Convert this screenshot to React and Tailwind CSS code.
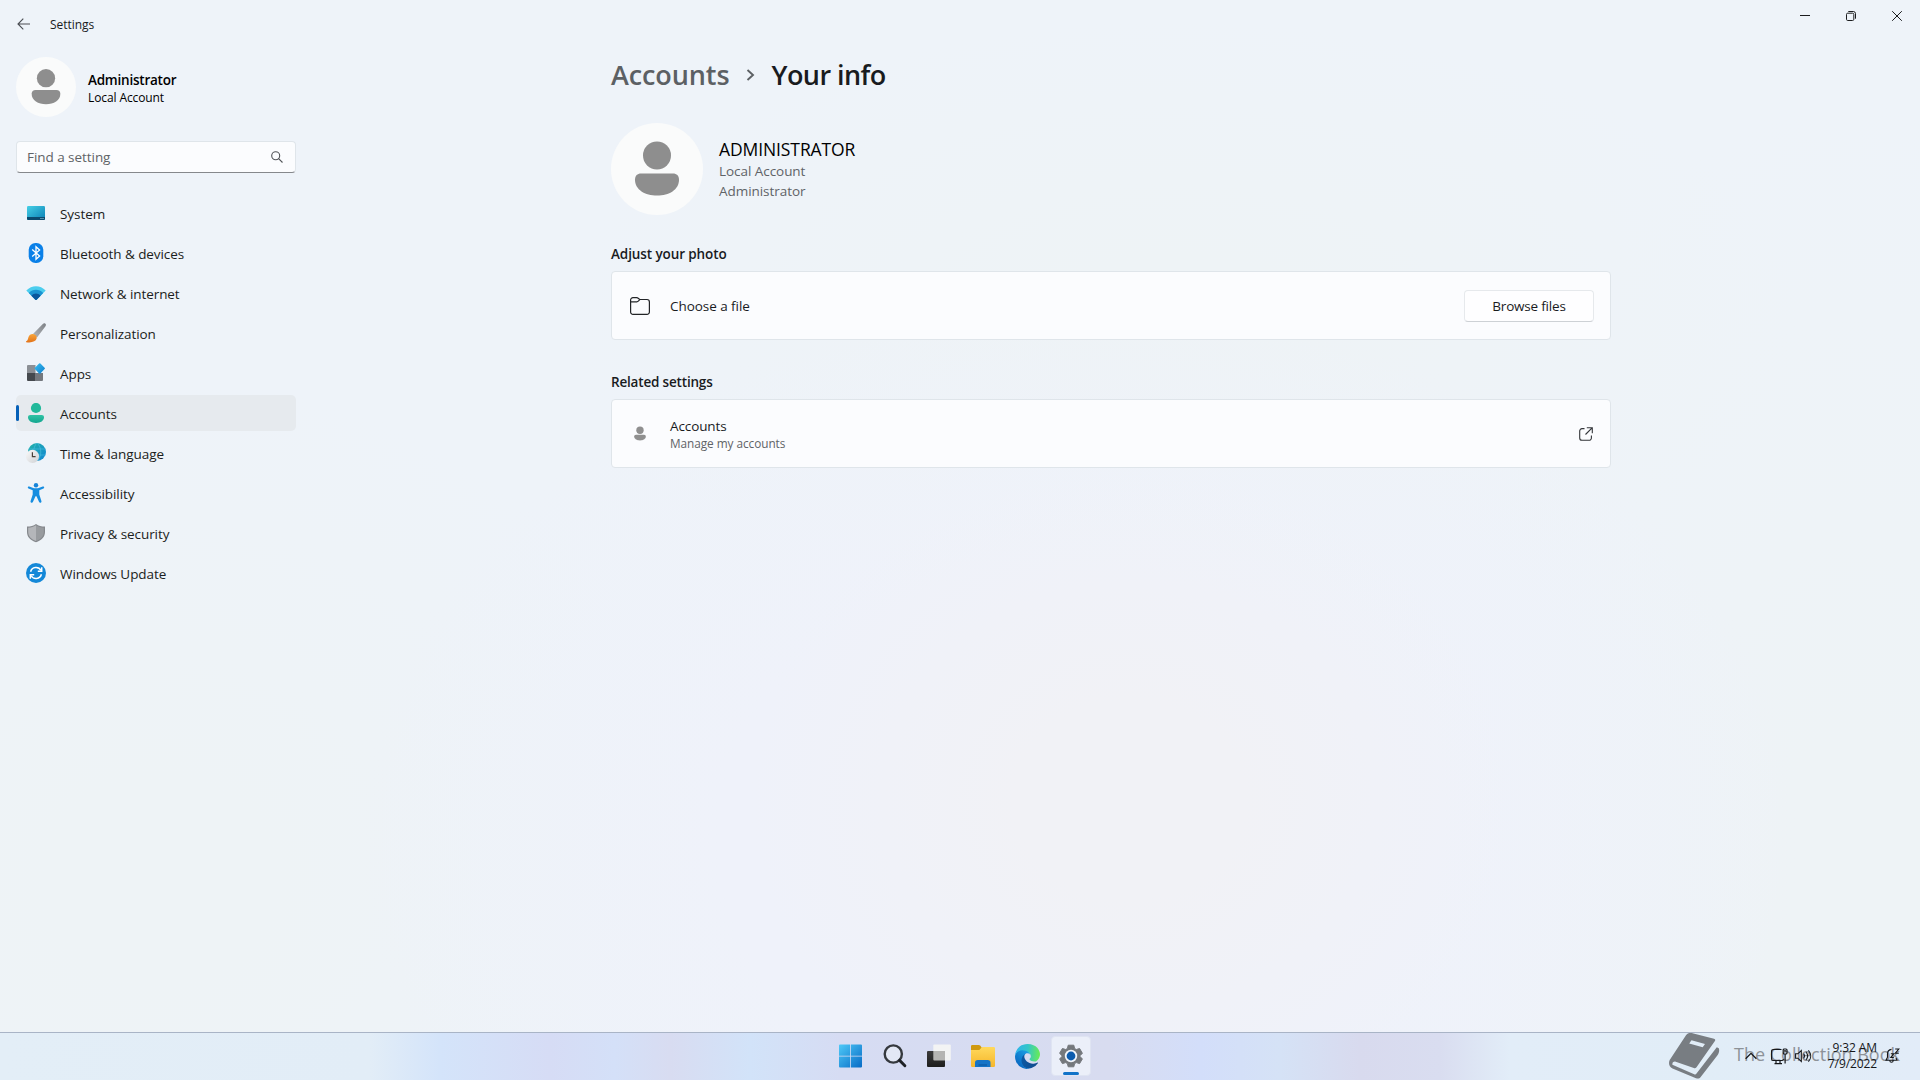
import { useState } from "react";

const SystemIcon = () => (
  <svg width="20" height="20" viewBox="0 0 20 20">
    <defs>
      <linearGradient id="sysA" x1="0" y1="0" x2="1" y2="1">
        <stop offset="0" stopColor="#45cfe6" />
        <stop offset="1" stopColor="#0a7fb5" />
      </linearGradient>
    </defs>
    <rect x="1" y="3" width="18" height="14" rx="1.2" fill="url(#sysA)" />
    <path d="M1 14h18v1.800a1.200 1.200 0 0 1-1.200 1.200H2.200A1.200 1.200 0 0 1 1 15.800z" fill="#0b4a6f" />
    <path d="M14.500 15h1v1h-1zM16.500 15h1v1h-1z" fill="#9bd8ee" />
  </svg>
);

const BluetoothIcon = () => (
  <svg width="20" height="20" viewBox="0 0 20 20">
    <rect x="2.700" y="0" width="14.600" height="20" rx="6.800" fill="#0a80e8" />
    <path d="M6.200 6.600l7.400 6.400L10 16.300V3.700L13.600 7l-7.400 6.400" fill="none" stroke="#fff" strokeWidth="1.300" />
  </svg>
);

const NetworkIcon = () => (
  <svg width="20" height="20" viewBox="0 0 20 20">
    <path d="M.3 7.600C5.800 1.800 14.200 1.800 19.700 7.600L10.600 16.700a.8.800 0 0 1-1.200 0z" fill="#4bcdee" />
    <path d="M2.800 10.100c4-4.400 10.400-4.400 14.400 0l-6.600 6.600a.8.800 0 0 1-1.200 0z" fill="#1b93d2" />
    <path d="M5.400 12.700c2.500-2.800 6.700-2.800 9.200 0l-4 4a.8.800 0 0 1-1.200 0z" fill="#0a569c" />
  </svg>
);

const BrushIcon = () => (
  <svg width="20" height="20" viewBox="0 0 20 20">
    <defs>
      <linearGradient id="brA" x1="1" y1="0" x2="0" y2="1">
        <stop offset="0" stopColor="#7d8186" />
        <stop offset="1" stopColor="#b3b6ba" />
      </linearGradient>
      <linearGradient id="brB" x1="0" y1="0" x2="0" y2="1">
        <stop offset="0" stopColor="#f9a63a" />
        <stop offset="1" stopColor="#e2731a" />
      </linearGradient>
    </defs>
    <path d="M19.400.7c.8.700.6 1.700.1 2.500L11 14.500l-4-3.400L16.800.9c.8-.7 1.800-.8 2.600-.2z" fill="url(#brA)" />
    <path d="M7.200 11c2.400.4 4 2.300 3.400 4.600-.8 3-4.600 4.300-10.200 3.600-.6-.1-.6-.7-.1-.9 1.700-.8 1.500-2.300 2.200-4.300C3.300 12 5 10.700 7.200 11z" fill="url(#brB)" />
  </svg>
);

const AppsIcon = () => (
  <svg width="20" height="20" viewBox="0 0 20 20">
    <defs>
      <linearGradient id="apA" x1="0" y1="0" x2="1" y2="1">
        <stop offset="0" stopColor="#37bdf0" />
        <stop offset="1" stopColor="#0f7fce" />
      </linearGradient>
    </defs>
    <path d="M2 2h7.500v8H1V3a1 1 0 0 1 1-1z" fill="#8b8f95" />
    <path d="M1 10h8.500v8H2a1 1 0 0 1-1-1z" fill="#45494e" />
    <path d="M9 10h8v7a1 1 0 0 1-1 1H9z" fill="#74787e" />
    <path d="M13.100.5a.9.900 0 0 1 1.300 0l4.200 4.300a.9.900 0 0 1 0 1.300l-4.200 4.400a.9.900 0 0 1-1.300 0L8.900 6.100a.9.900 0 0 1 0-1.300z" fill="url(#apA)" />
  </svg>
);

const AccountsIcon = () => (
  <svg width="20" height="20" viewBox="0 0 20 20">
    <defs>
      <linearGradient id="acA" x1="0" y1="0" x2="0" y2="1">
        <stop offset="0" stopColor="#31c3a4" />
        <stop offset="1" stopColor="#12a58f" />
      </linearGradient>
    </defs>
    <circle cx="10" cy="5" r="5.100" fill="#22b99b" />
    <path d="M4.300 12h11.400c1.400 0 2.300.9 2.300 2.300C18 17.800 14.500 20 10 20s-8-2.200-8-5.700C2 12.900 2.900 12 4.300 12z" fill="url(#acA)" />
  </svg>
);

const TimeIcon = () => (
  <svg width="20" height="20" viewBox="0 0 20 20">
    <defs>
      <linearGradient id="tmA" x1="0" y1="0" x2="1" y2="1">
        <stop offset="0" stopColor="#22b3a8" />
        <stop offset="1" stopColor="#1286d4" />
      </linearGradient>
      <linearGradient id="tmB" x1="0" y1="0" x2="1" y2="1">
        <stop offset="0" stopColor="#fafafa" />
        <stop offset="1" stopColor="#cfd1d4" />
      </linearGradient>
    </defs>
    <circle cx="11" cy="9" r="9" fill="url(#tmA)" />
    <g fill="none" stroke="#4cc0e2" strokeWidth=".6">
      <path d="M3 6h16.300M10 12h9.500M11 0c-4.500 4-4.500 14 0 18M11 0c5 4 5 14 0 18" />
    </g>
    <circle cx="6.500" cy="13.300" r="6.600" fill="url(#tmB)" />
    <path d="M6.400 9.300v4.300h3.200" fill="none" stroke="#4a4038" strokeWidth="1.200" />
  </svg>
);

const AccessIcon = () => (
  <svg width="20" height="20" viewBox="0 0 20 20">
    <circle cx="10" cy="2.200" r="2.200" fill="#1583d8" />
    <path
      d="M3.300 3.600L8 5.300h4l4.700-1.700c1.500-.5 2.100 1.500.8 2L13.300 7.300v4.200l2.100 6.600c.5 1.600-1.700 2.400-2.300.9L10.500 13.300h-1L6.900 19c-.6 1.500-2.800.7-2.300-.9l2.100-6.600V7.300L2.500 5.600c-1.300-.5-.7-2.500.8-2z"
      fill="#168de0"
    />
  </svg>
);

const ShieldIcon = () => (
  <svg width="20" height="20" viewBox="0 0 20 20">
    <path d="M10 1c2.600 2 5.300 2.500 9 2.500V9c0 5.200-3.500 8.300-9 10.200C4.500 17.300 1 14.200 1 9V3.500C4.700 3.500 7.400 3 10 1z" fill="#85888d" />
    <path d="M10 2.300V17.900C5.300 16.200 2.200 13.500 2.200 9V4.700c3.100-.1 5.500-.8 7.800-2.400z" fill="#b4b6ba" />
    <path d="M10 2.300c2.300 1.600 4.700 2.300 7.800 2.400V9c0 4.500-3.100 7.200-7.800 8.900z" fill="#989b9f" />
  </svg>
);

const UpdateIcon = () => (
  <svg width="20" height="20" viewBox="0 0 20 20">
    <circle cx="10" cy="10" r="10" fill="#1488d8" />
    <g fill="none" stroke="#fff" strokeWidth="1.500">
      <path d="M4.600 8.700A5.600 5.600 0 0 1 15 7.500M15.400 11.300A5.600 5.600 0 0 1 5 12.500" />
      <path d="M15.700 4.300v3.900h-3.900M4.300 15.700v-3.900h3.900" />
    </g>
  </svg>
);

const navItems = [
  { name: "System", icon: SystemIcon },
  { name: "Bluetooth & devices", icon: BluetoothIcon },
  { name: "Network & internet", icon: NetworkIcon },
  { name: "Personalization", icon: BrushIcon },
  { name: "Apps", icon: AppsIcon },
  { name: "Accounts", icon: AccountsIcon },
  { name: "Time & language", icon: TimeIcon },
  { name: "Accessibility", icon: AccessIcon },
  { name: "Privacy & security", icon: ShieldIcon },
  { name: "Windows Update", icon: UpdateIcon },
];

const Avatar = ({ size }) => (
  <svg width={size} height={size} viewBox="0 0 92 92">
    <circle cx="46" cy="46" r="46" fill="#fafbfb" />
    <circle cx="46" cy="32.500" r="14" fill="#8e8e8e" />
    <path d="M30 50.500h32c3.700 0 6 2.300 6 6C68 67 58 72.500 46 72.500S24 67 24 56.500c0-3.700 2.300-6 6-6z" fill="#8e8e8e" />
  </svg>
);

const StartIcon = () => (
  <svg width="24" height="24" viewBox="0 0 24 24">
    <defs>
      <linearGradient id="stA" x1="0" y1="0" x2="24" y2="24" gradientUnits="userSpaceOnUse">
        <stop offset="0" stopColor="#4fcaf8" />
        <stop offset="1" stopColor="#0568c4" />
      </linearGradient>
    </defs>
    <path d="M1 .500h10.200v11.200H0V1.500a1 1 0 0 1 1-1zM12 .500h10a1 1 0 0 1 1 1v10.200H12zM0 12.500h11.200v11H1a1 1 0 0 1-1-1zM12 12.500h11v10a1 1 0 0 1-1 1H12z" fill="url(#stA)" />
  </svg>
);

const TaskSearchIcon = () => (
  <svg width="24" height="24" viewBox="0 0 24 24" fill="none">
    <circle cx="10.300" cy="10" r="8.600" fill="#e3e8f5" stroke="#35393e" strokeWidth="2.400" />
    <path d="M16.600 16.400l5.300 5.300" stroke="#1f2226" strokeWidth="2.900" strokeLinecap="round" />
  </svg>
);

const TaskViewIcon = () => (
  <svg width="24" height="24" viewBox="0 0 24 24">
    <defs>
      <linearGradient id="tvA" x1="0" y1="0" x2="0" y2="1">
        <stop offset="0" stopColor="#3b3b3b" />
        <stop offset="1" stopColor="#1d1d1d" />
      </linearGradient>
    </defs>
    <rect x="6.300" y=".500" width="17.500" height="16" rx="1" fill="#f3f4f4" />
    <rect x="0" y="7" width="18" height="16" rx="1" fill="url(#tvA)" />
    <path d="M6.300 7H18v9.500H7.300a1 1 0 0 1-1-1z" fill="#b5b5b3" />
  </svg>
);

const FolderIcon = () => (
  <svg width="26" height="24" viewBox="0 0 26 24">
    <defs>
      <linearGradient id="foA" x1="0" y1="0" x2="0" y2="1">
        <stop offset="0" stopColor="#ffd95c" />
        <stop offset="1" stopColor="#f6b62b" />
      </linearGradient>
    </defs>
    <path d="M1 2.200A1.200 1.200 0 0 1 2.200 1h6.600c.6 0 1 .2 1.400.6L12 4v4H1z" fill="#d09a10" />
    <path d="M1 6h7.400c.6 0 1-.2 1.400-.6l1.800-1.900c.4-.4.800-.5 1.400-.5h10.800A1.200 1.200 0 0 1 25 4.200v17.600a1.200 1.200 0 0 1-1.200 1.200H2.200A1.200 1.200 0 0 1 1 21.800z" fill="url(#foA)" />
    <path d="M5 23v-4.200a2.800 2.800 0 0 1 2.800-2.800h9.900a2.800 2.800 0 0 1 2.800 2.800V23z" fill="#1674c6" />
    <path d="M8.500 20.500h8.500v1H8.500z" fill="#0b559c" />
  </svg>
);

const EdgeIcon = () => (
  <svg width="25" height="25" viewBox="0 0 256 256">
    <defs>
      <linearGradient id="edA" x1="60" y1="180" x2="236" y2="180" gradientUnits="userSpaceOnUse">
        <stop offset="0" stopColor="#0c59a4" />
        <stop offset="1" stopColor="#114a8b" />
      </linearGradient>
      <linearGradient id="edB" x1="150" y1="100" x2="45" y2="215" gradientUnits="userSpaceOnUse">
        <stop offset="0" stopColor="#1b9de2" />
        <stop offset="1" stopColor="#0a6cc4" />
      </linearGradient>
      <linearGradient id="edC" x1="10" y1="70" x2="250" y2="90" gradientUnits="userSpaceOnUse">
        <stop offset="0" stopColor="#2fb4ea" />
        <stop offset=".5" stopColor="#34c6c8" />
        <stop offset="1" stopColor="#66eb58" />
      </linearGradient>
    </defs>
    <path d="M231 190a93 93 0 0 1-11 5 102 102 0 0 1-36 6c-47 0-89-33-89-75a32 32 0 0 1 17-28c-43 2-54 46-54 72 0 74 68 82 83 82 8 0 20-2 27-5l1 0a128 128 0 0 0 67-53 4 4 0 0 0-5-4z" fill="url(#edA)" />
    <path d="M106 241a79 79 0 0 1-23-21 81 81 0 0 1 29-122c3-2 9-4 16-4a33 33 0 0 1 26 13c-3-24-38-53-78-53C34 54 0 92 0 130a130 130 0 0 0 12 55 128 128 0 0 0 157 64 76 76 0 0 1-63-8z" fill="url(#edB)" />
    <path d="M152 149c-1 1-3 4-3 8 0 3 2 7 6 9 20 14 58 12 59 12a85 85 0 0 0 42-74C256 71 225 0 128 0 37 0 0 75 0 128c0-28 34-63 76-63 46 0 86 29 86 62 0 11-6 18-10 22z" fill="url(#edC)" />
  </svg>
);

const GearIcon = () => (
  <svg width="24" height="24" viewBox="0 0 24 24">
    <path
      d="M9.200 1.200h5.600l.8 3.300 1.700 1 3.300-1 2.800 4.800L21 11.700v1l2.400 2.100-2.800 4.800-3.300-1-1.700 1-.8 3.200H9.200l-.8-3.200-1.700-1-3.300 1L.6 14.800 3 12.700v-1L.6 9.300l2.800-4.800 3.300 1 1.700-1z"
      fill="#74787c"
      stroke="#74787c"
      strokeLinejoin="round"
    />
    <circle cx="12" cy="12" r="6.200" fill="#f1f5fb" />
    <circle cx="12" cy="12" r="4.400" fill="#0c5cae" />
  </svg>
);

const taskbarApps = [
  { name: "Start", icon: StartIcon },
  { name: "Search", icon: TaskSearchIcon },
  { name: "Task View", icon: TaskViewIcon },
  { name: "File Explorer", icon: FolderIcon },
  { name: "Microsoft Edge", icon: EdgeIcon },
  { name: "Settings", icon: GearIcon, open: true },
];

const TitleBar = () => (
  <div className="flex justify-between h-12">
    <div className="flex items-center pl-[17px]">
      <svg width="14" height="12" viewBox="0 0 14 12" fill="none" stroke="#4a4d52" strokeWidth="1.100">
        <path d="M13 6H1M6.300.700L1 6l5.300 5.300" />
      </svg>
      <span className="ml-[19px] mt-[2px] text-xs tracking-[-0.05px]">Settings</span>
    </div>
    <div className="flex h-8 text-[#1b1c1e]">
      <button className="w-[46px] flex items-center justify-center">
        <svg width="10" height="10" viewBox="0 0 10 10" stroke="currentColor">
          <path d="M0 4.500h10" />
        </svg>
      </button>
      <button className="w-[46px] flex items-center justify-center">
        <svg width="10" height="10" viewBox="0 0 10 10" fill="none" stroke="currentColor">
          <rect x=".500" y="2.200" width="7.300" height="7.300" rx="1.200" />
          <path d="M2.300.500h5a2.200 2.200 0 0 1 2.200 2.200v5" />
        </svg>
      </button>
      <button className="w-[46px] flex items-center justify-center">
        <svg width="10" height="10" viewBox="0 0 10 10" stroke="currentColor">
          <path d="M.2.200l9.600 9.600M9.800.200L.2 9.800" />
        </svg>
      </button>
    </div>
  </div>
);

const Sidebar = () => {
  const [active, setActive] = useState("Accounts");
  return (
    <div className="w-[280px] ml-4 pt-[9px]">
      <div className="flex items-center h-[60px]">
        <Avatar size={60} />
        <div className="ml-3 pt-[3px] text-black">
          <p className="text-[13.5px] leading-[18px] font-semibold tracking-[-0.23px]">Administrator</p>
          <p className="text-xs leading-[18px] tracking-[-0.1px]">Local Account</p>
        </div>
      </div>

      <div className="flex items-center justify-between h-8 mt-6 pl-2.5 pr-3 bg-[#fbfcfe] rounded-[4px] border border-[#dfe5ea] border-b-[#85888c]">
        <span className="text-[13.5px] tracking-[-0.05px] text-[#5f6367]">Find a setting</span>
        <svg width="12" height="12" viewBox="0 0 12 12" fill="none" stroke="#505357" strokeWidth="1.100">
          <circle cx="4.700" cy="4.700" r="4" />
          <path d="M7.600 7.600l3.900 3.900" />
        </svg>
      </div>

      <div className="flex flex-col gap-1 mt-[22px]">
        {navItems.map((item) => (
          <button
            key={item.name}
            onClick={() => setActive(item.name)}
            className={
              active === item.name
                ? "flex items-center h-9 rounded-[5px] bg-[#e6eaee]"
                : "flex items-center h-9 rounded-[5px]"
            }
          >
            <span className={active === item.name ? "w-[3px] h-4 rounded-full bg-[#0560b8]" : "w-[3px] h-4"}></span>
            <span className="ml-[7px]">
              <item.icon />
            </span>
            <span className="ml-3.5 pt-[2px] text-[13.5px] text-[#1b1d20] tracking-[-0.07px]">{item.name}</span>
          </button>
        ))}
      </div>
    </div>
  );
};

const Content = () => (
  <div className="w-[1000px] pt-1">
    <div className="flex items-center h-[46px] text-[27px] leading-[46px] font-semibold">
      <span className="tracking-[-0.1px] text-[#5c6064]">Accounts</span>
      <svg className="ml-[17px]" width="9" height="12" viewBox="0 0 9 12" fill="none" stroke="#5c6064" strokeWidth="1.900">
        <path d="M1.500 1L7 6l-5.500 5" />
      </svg>
      <span className="ml-[16px] tracking-[-0.55px] text-[#191b1e]">Your info</span>
    </div>

    <div className="flex items-center mt-[25px]">
      <Avatar size={92} />
      <div className="ml-4">
        <p className="text-[17.5px] leading-[22px] tracking-[-0.1px] text-black">ADMINISTRATOR</p>
        <div className="pt-px text-[13.5px] leading-5 tracking-[-0.05px] text-[#5f6367]">
          <p>Local Account</p>
          <p>Administrator</p>
        </div>
      </div>
    </div>

    <h2 className="mt-[29px] h-5 leading-5 text-[13.5px] font-semibold tracking-[-0.1px]">Adjust your photo</h2>
    <div className="flex items-center h-[69px] mt-[7px] pl-[18px] pr-4 bg-[#fbfcfe] border border-[#dfe5ea] rounded-[4px]">
      <svg width="20" height="18" viewBox="0 0 20 18" fill="none" stroke="#222427" strokeWidth="1.200">
        <path d="M.600 3A2.400 2.400 0 0 1 3 .600h3.600c.7 0 1.200.2 1.700.7l1.300 1.200H17a2.400 2.400 0 0 1 2.400 2.400V15a2.400 2.400 0 0 1-2.400 2.400H3A2.400 2.400 0 0 1 .600 15z" />
        <path d="M.600 4.800h6.300c.6 0 1-.2 1.400-.6l1.500-1.500" />
      </svg>
      <span className="ml-5 pt-[2px] text-[13.5px] tracking-[-0.05px]">Choose a file</span>
      <button className="ml-auto w-[130px] h-8 pt-[2px] text-[13.5px] tracking-[-0.2px] bg-[#fefeff] border border-[#e6e9ec] border-b-[#cdd1d5] rounded-[4px]">
        Browse files
      </button>
    </div>

    <h2 className="mt-8 h-5 leading-5 text-[13.5px] font-semibold tracking-[-0.18px]">Related settings</h2>
    <div className="flex items-center h-[69px] mt-[7px] pl-[18px] pr-[17px] bg-[#fbfcfe] border border-[#dfe5ea] rounded-[4px]">
      <svg width="20" height="20" viewBox="0 0 20 20" fill="#8f8f8f">
        <circle cx="10" cy="6.300" r="3.700" />
        <path d="M6 10.800h8c1.100 0 1.800.7 1.800 1.700 0 2.500-2.800 3.900-5.800 3.900s-5.800-1.400-5.800-3.900c0-1 .7-1.700 1.800-1.700z" />
      </svg>
      <div className="ml-5 pt-[2px]">
        <p className="text-[13.5px] leading-[18px] tracking-[-0.1px]">Accounts</p>
        <p className="text-[11.8px] leading-[17px] tracking-[-0.05px] text-[#5f6367]">Manage my accounts</p>
      </div>
      <svg className="ml-auto" width="14" height="14" viewBox="0 0 14 14" fill="none" stroke="#333539" strokeWidth="1.100">
        <path d="M5.500 1.600H3A2.300 2.300 0 0 0 .700 3.900V11A2.300 2.300 0 0 0 3 13.300h7.100a2.300 2.300 0 0 0 2.300-2.300V8.500" />
        <path d="M7.800.700h5.500v5.500M13.100.900L6.500 7.500" />
      </svg>
    </div>
  </div>
);

const Tray = () => (
  <div className="flex items-center w-[186px] h-[46px] pl-[11px] pr-5 text-[#15171a]">
    <svg width="12" height="8" viewBox="0 0 12 8" fill="none" stroke="currentColor" strokeWidth="1.300">
      <path d="M.600 6.800L6 1.400l5.400 5.400" />
    </svg>
    <svg className="ml-3.5" width="17" height="17" viewBox="0 0 17 17" fill="none" stroke="currentColor" strokeWidth="1.200">
      <path d="M10.500 1.500H2.200A1.600 1.600 0 0 0 .600 3.100v7.800a1.600 1.600 0 0 0 1.600 1.600h8.600a1.600 1.600 0 0 0 1.600-1.600M5 12.500v3M9 12.500v3M3.500 15.600h7.500" />
      <rect x="12.200" y="1" width="3.800" height="5" rx="1" />
      <path d="M14.100 6v9.500M13 2.800h2.200" />
    </svg>
    <svg className="ml-[7px]" width="17" height="14" viewBox="0 0 17 14" fill="none" stroke="currentColor" strokeWidth="1.100">
      <path d="M.600 4.800h2.200L6.300 1.500v11L2.800 9.200H.600z" />
      <path d="M8.600 4.600c1 1.400 1 3.400 0 4.800M11 3c2 2.400 2 5.600 0 8M13.400 1.300c3 3.400 3 8 0 11.400" />
    </svg>
    <div className="ml-auto text-right text-xs leading-4 tracking-[-0.1px]">
      <p>9:32 AM</p>
      <p>7/9/2022</p>
    </div>
    <svg className="ml-2" width="15" height="16" viewBox="0 0 15 16" fill="none" stroke="currentColor" strokeWidth="1.100">
      <path d="M6.500 1.400C4 1.700 2.500 3.600 2.500 6v3.200L1 12.300h11l-1-2.300M4.700 12.500c.3 2.400 3.300 2.400 3.600 0" />
      <path d="M10.200 1h3.600l-3.600 4.300h3.600M5.800 5.700h3L5.800 9.500h3" />
    </svg>
  </div>
);

const Taskbar = () => (
  <div className="relative flex items-start h-12 border-t border-[#a9b4c6] bg-[linear-gradient(90deg,#e3eef7_0px,#e2edf7_370px,#d4e4fa_440px,#d6dcf5_550px,#d4e0f8_615px,#d8dcf1_670px,#d2e3f9_750px,#d6dcf3_840px,#d7dcf1_1000px,#d8dcf0_1110px,#d3defa_1200px,#d5e2f6_1280px,#d8daee_1360px,#d9ddf0_1440px,#e2edf8_1510px,#e1edf7_1700px,#e2ecf8_1920px)]">
    <div className="flex flex-1 items-center gap-1 h-[46px] pl-[831px]">
      {taskbarApps.map((app) => (
        <button
          key={app.name}
          aria-label={app.name}
          className={
            app.open
              ? "relative flex items-center justify-center w-10 h-10 rounded-[4px] border border-[#dfe4f2] bg-[#ebeff9]"
              : "relative flex items-center justify-center w-10 h-10"
          }
        >
          <app.icon />
          {app.open && <span className="absolute bottom-0 w-4 h-[3px] rounded-full bg-[#1173c8]"></span>}
        </button>
      ))}
    </div>

    {/* Watermark */}
    <div className="absolute left-[1668px] top-0 flex h-[46px] text-[#787d82]">
      <svg width="52" height="46" viewBox="0 0 52 46">
        <path
          fillRule="evenodd"
          fill="currentColor"
          d="M24.500.200L46 5.800c1.200.3 1.600 1.100.9 2.200L28.500 34.200c-.8 1.100-1.500 1.300-2.700.9L7 28.600c-2 .1-2.800 1.300-2.600 3.200l21.800 9.400c1 .4 1.700.2 2.300-.7L48.800 14.300l2 1c.9 2.700 0 5-1.300 7L32.700 44c-1.200 1.600-2.800 2-4.700 1.200L4.500 35.500C1.200 33.900.200 30.500 1.700 27L18 2.200C19.500.200 22 -.6 24.500.200zM23.500 7.300l-2.300 3.200 13.500 3.700 2.300-3.200z"
        />
      </svg>
      <span className="ml-3.5 leading-[43px] text-[18px] text-[#8d9298]">The Collection Book</span>
    </div>

    <div className="relative flex">
      <Tray />
    </div>
  </div>
);

export default function App() {
  return (
    <div className="flex flex-col w-[1920px] h-[1080px] overflow-hidden font-['Open_Sans',sans-serif] text-[#191b1e] bg-[#eef3f9]">
      <div className="flex flex-col flex-1 bg-[radial-gradient(ellipse_380px_330px_at_1130px_800px,#f1f2f6_30%,transparent_100%),radial-gradient(ellipse_720px_540px_at_1080px_840px,#eff2fa_50%,transparent_100%),radial-gradient(ellipse_560px_500px_at_160px_880px,#eef3f6_20%,transparent_100%),radial-gradient(ellipse_620px_300px_at_1180px_320px,#eef3f6_20%,transparent_100%),radial-gradient(ellipse_400px_800px_at_1850px_900px,#eef3f6_20%,transparent_100%)]">
        <TitleBar />
        <div className="flex gap-[315px]">
          <Sidebar />
          <Content />
        </div>
      </div>
      <Taskbar />
    </div>
  );
}
